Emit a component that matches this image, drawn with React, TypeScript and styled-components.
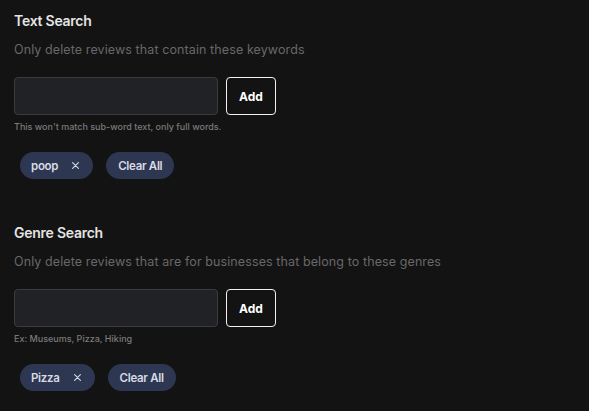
import React from "react";
import styled, { createGlobalStyle } from "styled-components";

const Global = createGlobalStyle`
  html, body { margin: 0; padding: 0; background: #131313; }
  body { font-family: Inter, "Noto Sans", sans-serif; -webkit-font-smoothing: antialiased; }
  * { box-sizing: border-box; }
`;

const Page = styled.div`
  width: 589px;
  height: 411px;
  background: #131313;
  padding: 11px 14px 0;
  overflow: hidden;
`;

const Section = styled.section<{ $gap?: number }>`
  display: flex;
  flex-direction: column;
  margin-bottom: ${(p) => p.$gap ?? 0}px;
`;

const Title = styled.h2`
  margin: 0;
  font-size: 14px;
  line-height: 20px;
  font-weight: 600;
  letter-spacing: -0.25px;
  color: #e4e4e4;
`;

const Subtitle = styled.p`
  margin: 9px 0 0;
  font-size: 12.5px;
  line-height: 20px;
  font-weight: 400;
  letter-spacing: 0.1px;
  color: #686868;
`;

const InputRow = styled.div`
  display: flex;
  gap: 8px;
  margin-top: 17px;
`;

const Input = styled.input`
  width: 204px;
  height: 38px;
  background: #212226;
  border: 1px solid #3a3b3f;
  border-radius: 4px;
  outline: none;
  color: #e4e4e4;
  font: inherit;
  padding: 0 10px;
`;

const AddButton = styled.button`
  width: 50px;
  height: 38px;
  background: #131313;
  border: 1px solid #f2f2f2;
  border-radius: 4px;
  color: #ffffff;
  font-family: Inter, sans-serif;
  font-size: 12px;
  font-weight: 700;
  padding: 0;
`;

const Help = styled.div`
  margin-top: 5px;
  font-size: 9px;
  line-height: 14px;
  font-weight: 500;
  color: #7a7a7a;
`;

const Chips = styled.div`
  display: flex;
  gap: 13px;
  margin-top: 18px;
  padding-left: 6px;
`;

const Chip = styled.div<{ $removable?: boolean }>`
  display: inline-flex;
  align-items: center;
  height: 27px;
  padding: 0 ${(p) => (p.$removable ? 14 : 12)}px 0 ${(p) => (p.$removable ? 11 : 12)}px;
  border-radius: 14px;
  background: #2e3752;
  color: #d8dbe4;
  font-size: 11.5px;
  font-weight: 600;
  letter-spacing: -0.3px;
`;

const Remove = styled.span`
  display: inline-flex;
  align-items: center;
  justify-content: center;
  width: 7px;
  height: 7px;
  margin-left: 14px;
`;

function XIcon() {
  return (
    <svg width="7" height="7" viewBox="0 0 7 7">
      <path d="M0.6 0.6L6.4 6.4M6.4 0.6L0.6 6.4" stroke="#d8dbe4" strokeWidth="1.1" strokeLinecap="round" />
    </svg>
  );
}

function FilterSection(props: {
  title: string;
  subtitle: string;
  help: string;
  tags: string[];
  gap?: number;
}) {
  return (
    <Section $gap={props.gap}>
      <Title>{props.title}</Title>
      <Subtitle>{props.subtitle}</Subtitle>
      <InputRow>
        <Input type="text" />
        <AddButton>Add</AddButton>
      </InputRow>
      <Help>{props.help}</Help>
      <Chips>
        {props.tags.map((t) => (
          <Chip key={t} $removable>
            {t}
            <Remove>
              <XIcon />
            </Remove>
          </Chip>
        ))}
        <Chip>Clear All</Chip>
      </Chips>
    </Section>
  );
}

export default function App() {
  return (
    <>
      <Global />
      <Page>
        <FilterSection
          title="Text Search"
          subtitle="Only delete reviews that contain these keywords"
          help="This won't match sub-word text, only full words."
          tags={["poop"]}
          gap={44}
        />
        <FilterSection
          title="Genre Search"
          subtitle="Only delete reviews that are for businesses that belong to these genres"
          help="Ex: Museums, Pizza, Hiking"
          tags={["Pizza"]}
        />
      </Page>
    </>
  );
}
